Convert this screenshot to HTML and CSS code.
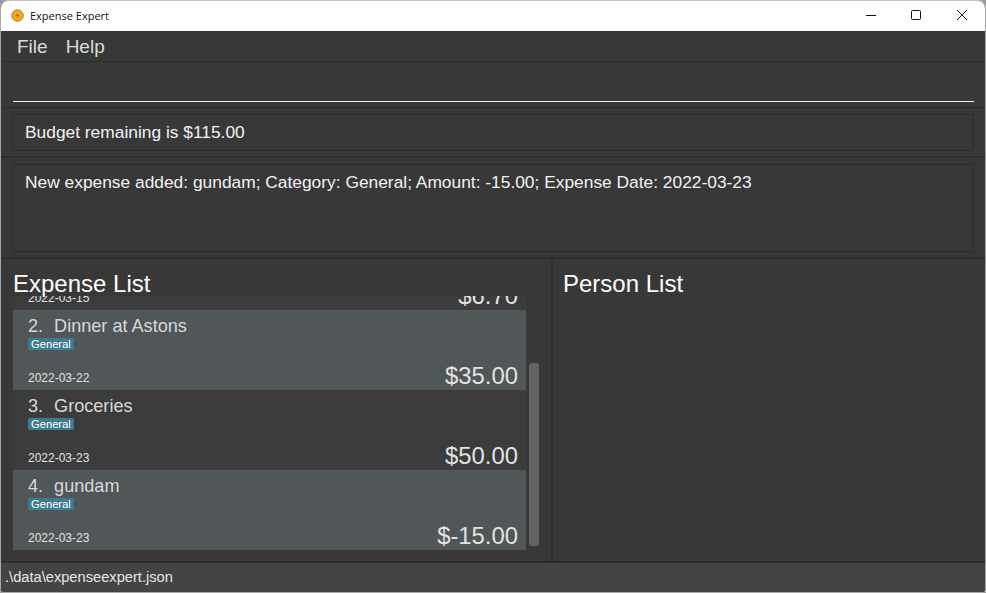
FILE: index.html
```html
<!DOCTYPE html>
<html lang="en">
<head>
<meta charset="utf-8">
<title>Expense Expert</title>
<link rel="stylesheet" href="styles.css">
</head>
<body>
<div class="window">
  <header class="titlebar">
    <svg class="app-icon" width="13" height="13" viewBox="0 0 14 14" aria-hidden="true">
      <circle cx="7" cy="7" r="6.3" fill="#f5a80f" stroke="#8a7a50" stroke-width="0.8"/>
      <circle cx="7" cy="7" r="2.4" fill="#e09508"/>
      <circle cx="7" cy="7" r="0.9" fill="#4a3c20"/>
    </svg>
    <span class="app-title">Expense Expert</span>
    <div class="controls">
      <svg class="control" width="46" height="31" viewBox="0 0 46 31" aria-hidden="true"><path d="M19 14.5h10" stroke="#111" fill="none"/></svg>
      <svg class="control" width="46" height="31" viewBox="0 0 46 31" aria-hidden="true"><rect x="18.5" y="9.5" width="9" height="9" rx="1" stroke="#111" fill="none"/></svg>
      <svg class="control" width="46" height="31" viewBox="0 0 46 31" aria-hidden="true"><path d="M18 9l10 10M28 9l-10 10" stroke="#111" fill="none"/></svg>
    </div>
  </header>
  <nav class="menubar">
    <span class="menu-item">File</span>
    <span class="menu-item">Help</span>
  </nav>
  <section class="command-pane"><div class="command-input"></div></section>
  <section class="pane budget-pane"><div class="box">Budget remaining is $115.00</div></section>
  <section class="pane result-pane"><div class="box">New expense added: gundam; Category: General; Amount: -15.00; Expense Date: 2022-03-23</div></section>
  <main class="lists">
    <section class="expense-panel">
      <h2 class="list-title">Expense List</h2>
      <div class="list-body">
        <div class="viewport">
          <article class="card">
            <div class="card-bottom"><span class="date">2022-03-15</span><span class="amount">$6.70</span></div>
          </article>
          <article class="card card-alt">
            <div class="name"><span class="index">2.</span>Dinner at Astons</div>
            <span class="tag">General</span>
            <div class="card-bottom"><span class="date">2022-03-22</span><span class="amount">$35.00</span></div>
          </article>
          <article class="card">
            <div class="name"><span class="index">3.</span>Groceries</div>
            <span class="tag">General</span>
            <div class="card-bottom"><span class="date">2022-03-23</span><span class="amount">$50.00</span></div>
          </article>
          <article class="card card-alt">
            <div class="name"><span class="index">4.</span>gundam</div>
            <span class="tag">General</span>
            <div class="card-bottom"><span class="date">2022-03-23</span><span class="amount">$-15.00</span></div>
          </article>
        </div>
        <div class="scrolltrack"><div class="scrollthumb"></div></div>
      </div>
    </section>
    <section class="person-panel">
      <h2 class="list-title">Person List</h2>
    </section>
  </main>
  <footer class="statusbar">.\data\expenseexpert.json</footer>
</div>
</body>
</html>
```

FILE: styles.css
```css
* { box-sizing: border-box; }
html, body { margin: 0; height: 100%; background: #9a9a9a; }
body { overflow: hidden; font-family: "Liberation Sans", Arial, sans-serif; }
.window {
  width: 986px; height: 593px;
  display: flex; flex-direction: column;
  background: #383838;
  border: 1px solid #a8a8a8; border-top-color: #c4c4c4;
  border-radius: 8px 8px 4px 4px;
  overflow: hidden;
}
.titlebar {
  height: 30px; flex: none;
  display: flex; align-items: center;
  background: #fff; padding-left: 10px;
}
.app-icon { flex: none; margin-top: -2px; }
.app-title {
  margin-left: 6px;
  font: 11px "Open Sans", "Noto Sans", sans-serif;
  color: #111;
  margin-top: -1px;
}
.controls { margin-left: auto; display: flex; }
.control { display: block; }
.menubar {
  height: 31px; flex: none;
  display: flex; align-items: center; gap: 18px;
  padding: 2px 0 0 16px;
  border-bottom: 1px solid #2d2d2d;
}
.menu-item { font-size: 19px; color: #dcdcdc; }
.command-pane {
  height: 46px; flex: none;
  padding: 0 11px 0 12px;
  border-bottom: 1px solid #2d2d2d;
}
.command-input { height: 40px; border-bottom: 1px solid #f2f2f2; }
.pane { flex: none; padding: 6px 11px 5px; border-bottom: 2px solid #2d2d2d; }
.budget-pane { height: 50px; }
.result-pane { height: 101px; }
.box {
  height: 100%;
  border: 1px solid #2d2d2d;
  padding: 7px 12px;
  font-size: 17.36px; line-height: 20px;
  color: #f2f2f2;
}
.lists { flex: 1; min-height: 0; display: flex; }
.expense-panel {
  width: 552px; flex: none;
  padding: 10px 14px 11px 12px;
  display: flex; flex-direction: column;
  border-right: 2px solid #2d2d2d;
}
.person-panel { flex: 1; padding: 10px; }
.list-title {
  margin: 0; height: 27px;
  font-size: 24px; font-weight: normal; line-height: 30px;
  color: #fff;
  position: relative; z-index: 1;
}
.list-body { flex: 1; min-height: 0; display: flex; }
.viewport {
  width: 513px; flex: none;
  display: flex; flex-direction: column; justify-content: flex-end;
  overflow: hidden;
  background: #3c3c3c;
}
.card {
  height: 80px; flex: none;
  display: flex; flex-direction: column; align-items: flex-start;
  padding: 6px 8px 0 15px;
  background: #3c3c3c;
}
.card-alt { background: #515658; }
.name { font-size: 18.1px; line-height: 21px; color: #d8d8d8; }
.index { margin-right: 11px; }
.tag {
  margin-top: 1px;
  height: 12px; padding: 0 3px;
  font-size: 11.2px; line-height: 12px;
  color: #fff; background: #3e7b91;
  border-radius: 2px;
}
.card-bottom {
  margin-top: auto;
  align-self: stretch;
  height: 30px;
  display: flex; justify-content: space-between; align-items: flex-end;
}
.date { font-size: 12px; line-height: 14px; color: #e2e2e2; margin-bottom: 5px; }
.amount { font-size: 23.85px; line-height: 28px; color: #e2e2e2; }
.scrolltrack { flex: 1; display: flex; justify-content: center; padding-left: 3px; }
.scrollthumb {
  width: 10px; height: 183px; margin-top: 67px;
  background: #636363; border-radius: 3px;
}
.statusbar {
  height: 31px; flex: none;
  background: #444;
  border-top: 2px solid #2d2d2d;
  padding-left: 4px;
  font-size: 14.67px; line-height: 28px;
  color: #e6e6e6;
}
```
